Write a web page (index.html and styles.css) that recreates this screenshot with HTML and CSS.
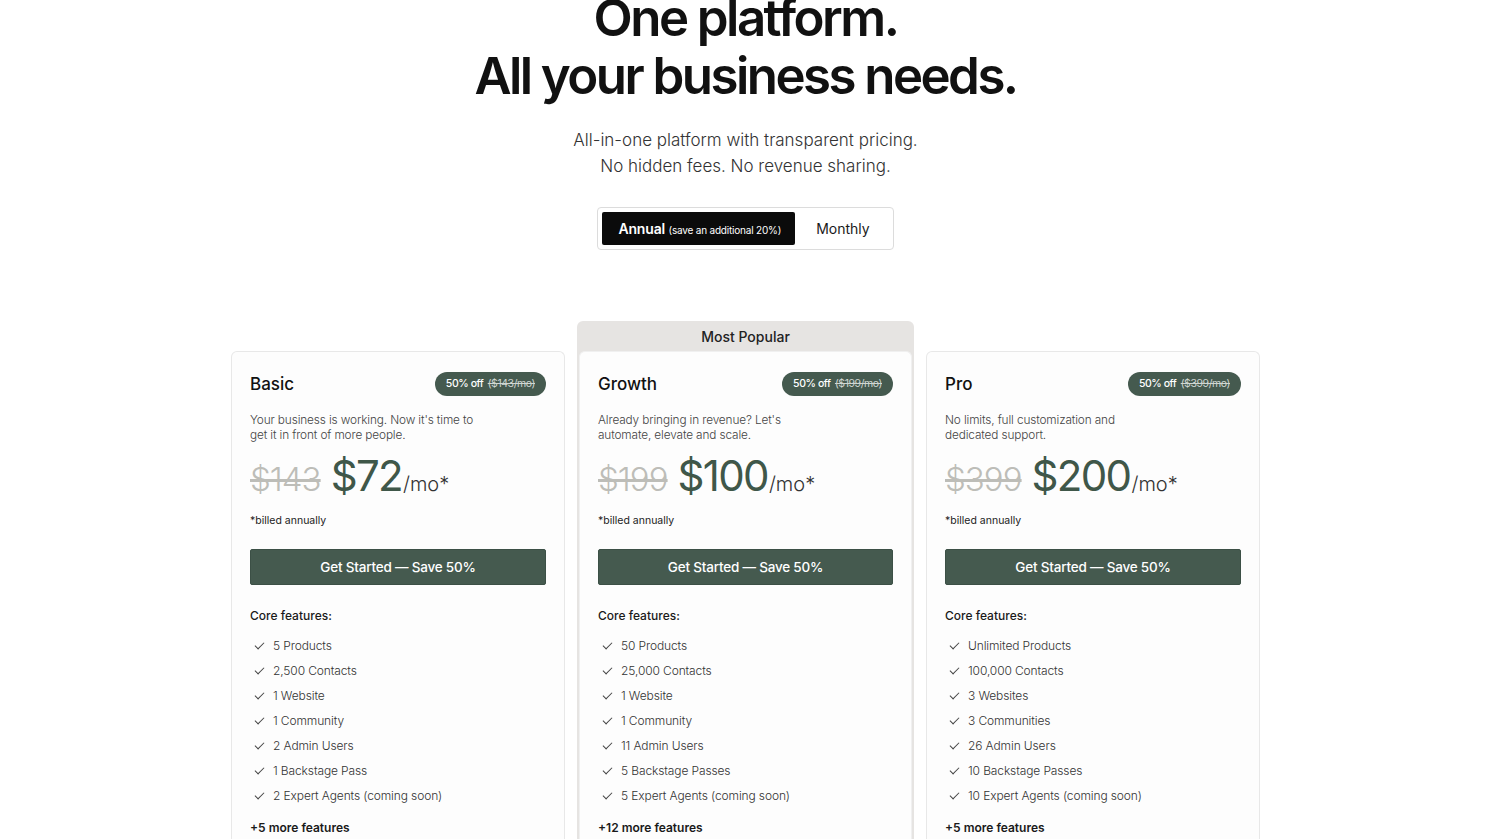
FILE: index.html
```html
<!DOCTYPE html>
<html lang="en">
<head>
    <meta charset="UTF-8">
    <meta name="viewport" content="width=device-width, initial-scale=1.0">
    <title>Pricing</title>
    <link rel="stylesheet" href="styles.css">
</head>
<body>
    <div class="page">
        <header class="hero">
            <h1>One platform.<br>All your business needs.</h1>
            <p class="lead">All-in-one platform with transparent pricing.<br>No hidden fees. No revenue sharing.</p>
            <div class="billing-toggle">
                <button class="toggle-btn active">Annual <span class="save">(save an additional 20%)</span></button>
                <button class="toggle-btn">Monthly</button>
            </div>
        </header>

        <div class="plans">
            <div class="plan">
                <div class="card">
                    <div class="card-head">
                        <h2>Basic</h2>
                        <span class="badge">50% off <s>($143/mo)</s></span>
                    </div>
                    <p class="desc">Your business is working. Now it's time to<br>get it in front of more people.</p>
                    <div class="price"><s class="old">$143</s> <span class="now">$72</span><span class="per">/mo*</span></div>
                    <p class="billed">*billed annually</p>
                    <button class="cta">Get Started — Save 50%</button>
                    <p class="core">Core features:</p>
                    <ul class="features">
                        <li>5 Products</li>
                        <li>2,500 Contacts</li>
                        <li>1 Website</li>
                        <li>1 Community</li>
                        <li>2 Admin Users</li>
                        <li>1 Backstage Pass</li>
                        <li>2 Expert Agents (coming soon)</li>
                    </ul>
                    <p class="more">+5 more features</p>
                </div>
            </div>

            <div class="plan popular">
                <div class="popular-label">Most Popular</div>
                <div class="card">
                    <div class="card-head">
                        <h2>Growth</h2>
                        <span class="badge">50% off <s>($199/mo)</s></span>
                    </div>
                    <p class="desc">Already bringing in revenue? Let's<br>automate, elevate and scale.</p>
                    <div class="price"><s class="old">$199</s> <span class="now">$100</span><span class="per">/mo*</span></div>
                    <p class="billed">*billed annually</p>
                    <button class="cta">Get Started — Save 50%</button>
                    <p class="core">Core features:</p>
                    <ul class="features">
                        <li>50 Products</li>
                        <li>25,000 Contacts</li>
                        <li>1 Website</li>
                        <li>1 Community</li>
                        <li>11 Admin Users</li>
                        <li>5 Backstage Passes</li>
                        <li>5 Expert Agents (coming soon)</li>
                    </ul>
                    <p class="more">+12 more features</p>
                </div>
            </div>

            <div class="plan">
                <div class="card">
                    <div class="card-head">
                        <h2>Pro</h2>
                        <span class="badge">50% off <s>($399/mo)</s></span>
                    </div>
                    <p class="desc">No limits, full customization and<br>dedicated support.</p>
                    <div class="price"><s class="old">$399</s> <span class="now">$200</span><span class="per">/mo*</span></div>
                    <p class="billed">*billed annually</p>
                    <button class="cta">Get Started — Save 50%</button>
                    <p class="core">Core features:</p>
                    <ul class="features">
                        <li>Unlimited Products</li>
                        <li>100,000 Contacts</li>
                        <li>3 Websites</li>
                        <li>3 Communities</li>
                        <li>26 Admin Users</li>
                        <li>10 Backstage Passes</li>
                        <li>10 Expert Agents (coming soon)</li>
                    </ul>
                    <p class="more">+5 more features</p>
                </div>
            </div>
        </div>
    </div>
</body>
</html>
```

FILE: styles.css
```css
* {
    margin: 0;
    padding: 0;
    box-sizing: border-box;
}
html, body {
    height: 100%;
    overflow: hidden;
}
body {
    background: #fff;
    color: #1a1a1a;
    font-family: Inter, "Noto Sans", sans-serif;
    padding-right: 9px;
}
.page {
    width: 1029px;
    margin: 0 auto;
}
.hero {
    text-align: center;
    margin-top: -11px;
}
h1 {
    font-size: 51px;
    line-height: 58px;
    font-weight: 600;
    letter-spacing: -0.05em;
    color: #111;
}
.lead {
    margin-top: 22px;
    font-size: 17px;
    line-height: 26px;
    font-weight: 300;
    color: #333;
}
.billing-toggle {
    display: inline-flex;
    align-items: center;
    margin-top: 28px;
    padding: 4px;
    border: 1px solid #dcdcdc;
    border-radius: 4px;
    background: #fff;
}
.toggle-btn {
    border: none;
    background: none;
    font-family: inherit;
    font-size: 14px;
    color: #1a1a1a;
    height: 33px;
    padding: 0 19px 0 21px;
    cursor: pointer;
}
.toggle-btn.active {
    background: #0b0b0b;
    color: #fff;
    font-weight: 600;
    border-radius: 2px;
    padding: 0 14px 0 16px;
    letter-spacing: -0.01em;
}
.toggle-btn .save {
    font-size: 10px;
    font-weight: 400;
    letter-spacing: -0.02em;
}
.plans {
    display: grid;
    grid-template-columns: 334px 337px 334px;
    gap: 12px;
    align-items: end;
    margin-top: 71px;
}
.popular {
    background: #e6e4e2;
    border-radius: 6px 6px 0 0;
    padding: 0 2px;
}
.popular-label {
    height: 30px;
    line-height: 32px;
    text-align: center;
    font-size: 14px;
    font-weight: 500;
    color: #222;
}
.card {
    background: #fdfdfd;
    border: 1px solid #e8e8e8;
    border-radius: 6px 6px 0 0;
    border-bottom: none;
    padding: 20px 18px 0;
    height: 489px;
}
.popular .card {
    border-color: #f0f0f0;
}
.card-head {
    display: flex;
    justify-content: space-between;
    align-items: center;
    height: 24px;
}
h2 {
    font-size: 17px;
    font-weight: 500;
    color: #111;
}
.badge {
    background: #455a4f;
    color: #fff;
    font-size: 10.5px;
    font-weight: 500;
    letter-spacing: -0.04em;
    height: 24px;
    line-height: 24px;
    padding: 0 11px;
    border-radius: 12px;
}
.badge s {
    color: #cfd6d2;
    font-weight: 400;
    margin-left: 2px;
}
.desc {
    margin-top: 17px;
    font-size: 11.8px;
    line-height: 15px;
    font-weight: 300;
    letter-spacing: -0.01em;
    color: #444;
}
.price {
    margin-top: 13px;
    height: 40px;
    line-height: 40px;
    display: flex;
    align-items: baseline;
    white-space: nowrap;
}
.old {
    font-size: 33px;
    font-weight: 300;
    color: #bdbdb8;
    letter-spacing: -0.03em;
    margin-right: 10px;
}
.now {
    font-size: 42px;
    font-weight: 400;
    color: #3f5749;
    letter-spacing: -0.04em;
}
.per {
    font-size: 20px;
    font-weight: 300;
    color: #333;
    margin-left: 1px;
}
.billed {
    margin-top: 18px;
    font-size: 10.5px;
    line-height: 14px;
    color: #222;
}
.cta {
    display: block;
    width: 100%;
    margin-top: 21px;
    height: 36px;
    border: 1px solid #3c5046;
    border-radius: 2px;
    background: #455a4f;
    color: #fff;
    font-family: inherit;
    font-size: 13.5px;
    font-weight: 500;
    letter-spacing: -0.015em;
    cursor: pointer;
}
.core {
    margin-top: 23px;
    font-size: 12px;
    line-height: 16px;
    font-weight: 500;
    color: #1a1a1a;
}
.features {
    list-style: none;
    margin-top: 9px;
}
.features li {
    display: flex;
    align-items: center;
    height: 25px;
    font-size: 12px;
    font-weight: 300;
    letter-spacing: -0.01em;
    color: #333;
}
.features li::before {
    content: "";
    width: 8px;
    height: 4px;
    border-left: 1.2px solid #444;
    border-bottom: 1.2px solid #444;
    transform: rotate(-45deg);
    margin: -3px 0 0 5px;
    margin-right: 9px;
}
.more {
    margin-top: 12px;
    font-size: 12px;
    line-height: 16px;
    font-weight: 600;
    color: #1a1a1a;
}
```
